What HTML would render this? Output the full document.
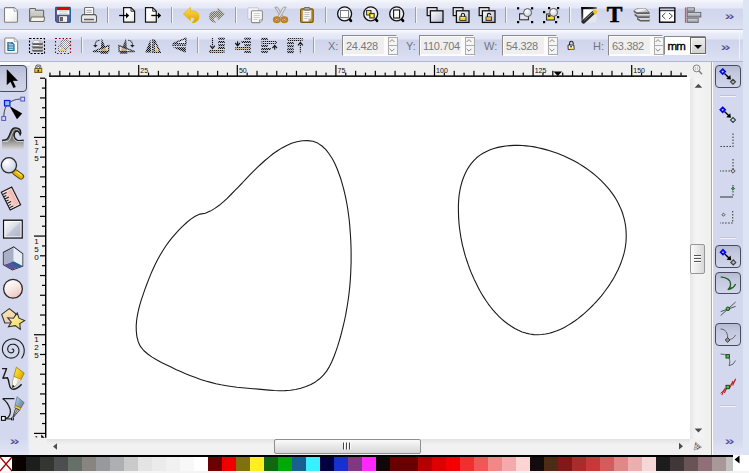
<!DOCTYPE html>
<html><head><meta charset="utf-8"><title>Inkscape</title>
<style>
html,body{margin:0;padding:0;}
body{width:749px;height:473px;overflow:hidden;position:relative;background:#f0f0f0;font-family:"Liberation Sans",sans-serif;font-size:12px;}
.abs,.a{position:absolute;}
svg{position:absolute;overflow:visible;}
#tb1{left:0;top:0;width:743px;height:29px;background:linear-gradient(to bottom,#f6f7fc 0px,#eaecf8 4px,#e5e8f6 8px,#d1d6ed 9px,#d4d9ee 18px,#dde0f2 28px);}
#tb1l{left:0;top:28.600px;width:743px;height:1.400px;background:#b2b6d0;}
#tb2{left:0;top:30px;width:743px;height:31px;background:linear-gradient(to bottom,#fafbfe 0px,#e8ebf8 4px,#e2e5f5 9px,#cfd4eb 10px,#d4d9ee 20px,#dde0f2 30px);}
#tb2l{left:0;top:60.500px;width:743px;height:1.500px;background:#b2b6ce;}
#rstrip{left:743px;top:0;width:6px;height:473px;background:#dce5f4;}
#toolbox{left:0;top:62px;width:30px;height:393px;background:linear-gradient(to right,#d3d8ee 0,#d3d8ee 27px,#e8ebf7 29px,#eef0f8 30px);}
#toolboxt{left:0;top:62px;width:30px;height:5px;background:linear-gradient(to bottom,#fdfdfe 0,#fafbfe 3px,#d3d8ee 5px);}
#snapbar{left:713px;top:62px;width:30px;height:393px;background:#d3d8ee;}
#snapl{left:711px;top:62px;width:1px;height:393px;background:#a8a8a8;box-shadow:1px 0 0 #fff;}
#canvas{left:47px;top:77px;width:643px;height:362px;background:#fff;}
.sep{position:absolute;width:1px;height:16px;background:#9a9eb4;box-shadow:1px 0 0 #f4f5fb;}
.hsep{position:absolute;height:1px;width:16px;background:#f2f3fa;box-shadow:0 -1px 0 #bfc4dc;}
.lbl{position:absolute;color:#74747e;font-size:11px;line-height:12px;top:40px;}
.fld{position:absolute;top:35px;height:19px;width:53px;background:#fbfbfb;border:1px solid #8a8a8a;border-right-color:#fff;border-bottom-color:#fff;color:#7a7a7e;font-size:11px;line-height:12px;letter-spacing:-0.300px;}
.fld b{position:absolute;left:1px;top:1px;width:40px;height:17px;background:#efefef;font-weight:normal;}
.fld span{position:absolute;left:3px;top:4px;}
.spin i{position:absolute;left:44.500px;width:8px;height:7.600px;border:1px solid #aaa;background:#f5f5f5;}
.pbtn{position:absolute;width:24.200px;height:20.600px;border:1.400px solid #484c5a;border-radius:4px;background:linear-gradient(to bottom,#b6bbd4 0,#c4c9e0 35%,#d0d5ea 100%);}
.chev{position:absolute;color:#4a4496;font-size:15px;font-weight:normal;line-height:10px;transform:scale(1.120,0.780);transform-origin:0 0;-webkit-text-stroke:0.300px #4a4496;}
.rt{position:absolute;font-size:9px;line-height:9px;color:#000;}
</style></head><body>
<div id="tb1" class="abs"></div><div id="tb1l" class="abs"></div>
<div id="tb2" class="abs"></div><div id="tb2l" class="abs"></div>
<div id="toolbox" class="abs"></div><div id="toolboxt" class="abs"></div><div class="a" style="left:0;top:438px;width:28px;height:17px;background:linear-gradient(to bottom,rgba(226,229,245,0),rgba(226,229,245,1))"></div>
<div id="snapl" class="abs"></div><div id="snapbar" class="abs"></div><div class="a" style="left:713px;top:438px;width:30px;height:17px;background:linear-gradient(to bottom,rgba(226,229,245,0),rgba(226,229,245,1))"></div>
<div id="rstrip" class="abs"></div><div class="a" style="left:738.500px;top:31px;width:1.500px;height:28px;background:#f0f2fa"></div>
<div id="canvas" class="abs"></div>
<svg width="749" height="473" style="left:0;top:0"><clipPath id="vrc"><rect x="31" y="77" width="16" height="360.700"/></clipPath><rect x="49" y="75.400" width="638" height="1.500" fill="#000"/><rect x="49.36" y="72.600" width="1.200" height="3" fill="#000"/><rect x="59.22" y="70.800" width="1.200" height="5" fill="#000"/><rect x="69.08" y="72.600" width="1.200" height="3" fill="#000"/><rect x="78.94" y="70.800" width="1.200" height="5" fill="#000"/><rect x="88.80" y="72.600" width="1.200" height="3" fill="#000"/><rect x="98.66" y="70.800" width="1.200" height="5" fill="#000"/><rect x="108.52" y="72.600" width="1.200" height="3" fill="#000"/><rect x="118.38" y="70.800" width="1.200" height="5" fill="#000"/><rect x="128.24" y="72.600" width="1.200" height="3" fill="#000"/><rect x="138.10" y="65" width="1.200" height="11" fill="#000"/><rect x="147.96" y="72.600" width="1.200" height="3" fill="#000"/><rect x="157.82" y="70.800" width="1.200" height="5" fill="#000"/><rect x="167.68" y="72.600" width="1.200" height="3" fill="#000"/><rect x="177.54" y="70.800" width="1.200" height="5" fill="#000"/><rect x="187.40" y="72.600" width="1.200" height="3" fill="#000"/><rect x="197.26" y="70.800" width="1.200" height="5" fill="#000"/><rect x="207.12" y="72.600" width="1.200" height="3" fill="#000"/><rect x="216.98" y="70.800" width="1.200" height="5" fill="#000"/><rect x="226.84" y="72.600" width="1.200" height="3" fill="#000"/><rect x="236.70" y="65" width="1.200" height="11" fill="#000"/><rect x="246.56" y="72.600" width="1.200" height="3" fill="#000"/><rect x="256.42" y="70.800" width="1.200" height="5" fill="#000"/><rect x="266.28" y="72.600" width="1.200" height="3" fill="#000"/><rect x="276.14" y="70.800" width="1.200" height="5" fill="#000"/><rect x="286.00" y="72.600" width="1.200" height="3" fill="#000"/><rect x="295.86" y="70.800" width="1.200" height="5" fill="#000"/><rect x="305.72" y="72.600" width="1.200" height="3" fill="#000"/><rect x="315.58" y="70.800" width="1.200" height="5" fill="#000"/><rect x="325.44" y="72.600" width="1.200" height="3" fill="#000"/><rect x="335.30" y="65" width="1.200" height="11" fill="#000"/><rect x="345.16" y="72.600" width="1.200" height="3" fill="#000"/><rect x="355.02" y="70.800" width="1.200" height="5" fill="#000"/><rect x="364.88" y="72.600" width="1.200" height="3" fill="#000"/><rect x="374.74" y="70.800" width="1.200" height="5" fill="#000"/><rect x="384.60" y="72.600" width="1.200" height="3" fill="#000"/><rect x="394.46" y="70.800" width="1.200" height="5" fill="#000"/><rect x="404.32" y="72.600" width="1.200" height="3" fill="#000"/><rect x="414.18" y="70.800" width="1.200" height="5" fill="#000"/><rect x="424.04" y="72.600" width="1.200" height="3" fill="#000"/><rect x="433.90" y="65" width="1.200" height="11" fill="#000"/><rect x="443.76" y="72.600" width="1.200" height="3" fill="#000"/><rect x="453.62" y="70.800" width="1.200" height="5" fill="#000"/><rect x="463.48" y="72.600" width="1.200" height="3" fill="#000"/><rect x="473.34" y="70.800" width="1.200" height="5" fill="#000"/><rect x="483.20" y="72.600" width="1.200" height="3" fill="#000"/><rect x="493.06" y="70.800" width="1.200" height="5" fill="#000"/><rect x="502.92" y="72.600" width="1.200" height="3" fill="#000"/><rect x="512.78" y="70.800" width="1.200" height="5" fill="#000"/><rect x="522.64" y="72.600" width="1.200" height="3" fill="#000"/><rect x="532.50" y="65" width="1.200" height="11" fill="#000"/><rect x="542.36" y="72.600" width="1.200" height="3" fill="#000"/><rect x="552.22" y="70.800" width="1.200" height="5" fill="#000"/><rect x="562.08" y="72.600" width="1.200" height="3" fill="#000"/><rect x="571.94" y="70.800" width="1.200" height="5" fill="#000"/><rect x="581.80" y="72.600" width="1.200" height="3" fill="#000"/><rect x="591.66" y="70.800" width="1.200" height="5" fill="#000"/><rect x="601.52" y="72.600" width="1.200" height="3" fill="#000"/><rect x="611.38" y="70.800" width="1.200" height="5" fill="#000"/><rect x="621.24" y="72.600" width="1.200" height="3" fill="#000"/><rect x="631.10" y="65" width="1.200" height="11" fill="#000"/><rect x="640.96" y="72.600" width="1.200" height="3" fill="#000"/><rect x="650.82" y="70.800" width="1.200" height="5" fill="#000"/><rect x="660.68" y="72.600" width="1.200" height="3" fill="#000"/><rect x="670.54" y="70.800" width="1.200" height="5" fill="#000"/><rect x="680.40" y="72.600" width="1.200" height="3" fill="#000"/><text x="140.3" y="73.400" font-size="8" font-family="Liberation Sans, sans-serif" fill="#0a0a0a" textLength="7.8" lengthAdjust="spacingAndGlyphs">25</text><text x="238.9" y="73.400" font-size="8" font-family="Liberation Sans, sans-serif" fill="#0a0a0a" textLength="7.8" lengthAdjust="spacingAndGlyphs">50</text><text x="337.5" y="73.400" font-size="8" font-family="Liberation Sans, sans-serif" fill="#0a0a0a" textLength="7.8" lengthAdjust="spacingAndGlyphs">75</text><text x="436.1" y="73.400" font-size="8" font-family="Liberation Sans, sans-serif" fill="#0a0a0a" textLength="11.7" lengthAdjust="spacingAndGlyphs">100</text><text x="534.7" y="73.400" font-size="8" font-family="Liberation Sans, sans-serif" fill="#0a0a0a" textLength="11.7" lengthAdjust="spacingAndGlyphs">125</text><text x="633.3" y="73.400" font-size="8" font-family="Liberation Sans, sans-serif" fill="#0a0a0a" textLength="11.7" lengthAdjust="spacingAndGlyphs">150</text><path d="M553.500 71.400h8.600l-4.300 4.600z" fill="#000"/><rect x="45" y="78.500" width="1.400" height="359.200" fill="#000"/><g clip-path="url(#vrc)"><rect x="40" y="77.60" width="5" height="1.200" fill="#000"/><rect x="42" y="87.47" width="3" height="1.200" fill="#000"/><rect x="40" y="97.33" width="5" height="1.200" fill="#000"/><rect x="42" y="107.20" width="3" height="1.200" fill="#000"/><rect x="40" y="117.07" width="5" height="1.200" fill="#000"/><rect x="42" y="126.93" width="3" height="1.200" fill="#000"/><rect x="34" y="136.80" width="11" height="1.200" fill="#000"/><rect x="42" y="146.67" width="3" height="1.200" fill="#000"/><rect x="40" y="156.53" width="5" height="1.200" fill="#000"/><rect x="42" y="166.40" width="3" height="1.200" fill="#000"/><rect x="40" y="176.27" width="5" height="1.200" fill="#000"/><rect x="42" y="186.14" width="3" height="1.200" fill="#000"/><rect x="40" y="196.00" width="5" height="1.200" fill="#000"/><rect x="42" y="205.87" width="3" height="1.200" fill="#000"/><rect x="40" y="215.74" width="5" height="1.200" fill="#000"/><rect x="42" y="225.60" width="3" height="1.200" fill="#000"/><rect x="34" y="235.47" width="11" height="1.200" fill="#000"/><rect x="42" y="245.34" width="3" height="1.200" fill="#000"/><rect x="40" y="255.20" width="5" height="1.200" fill="#000"/><rect x="42" y="265.07" width="3" height="1.200" fill="#000"/><rect x="40" y="274.94" width="5" height="1.200" fill="#000"/><rect x="42" y="284.80" width="3" height="1.200" fill="#000"/><rect x="40" y="294.67" width="5" height="1.200" fill="#000"/><rect x="42" y="304.54" width="3" height="1.200" fill="#000"/><rect x="40" y="314.41" width="5" height="1.200" fill="#000"/><rect x="42" y="324.27" width="3" height="1.200" fill="#000"/><rect x="34" y="334.14" width="11" height="1.200" fill="#000"/><rect x="42" y="344.01" width="3" height="1.200" fill="#000"/><rect x="40" y="353.87" width="5" height="1.200" fill="#000"/><rect x="42" y="363.74" width="3" height="1.200" fill="#000"/><rect x="40" y="373.61" width="5" height="1.200" fill="#000"/><rect x="42" y="383.48" width="3" height="1.200" fill="#000"/><rect x="40" y="393.34" width="5" height="1.200" fill="#000"/><rect x="42" y="403.21" width="3" height="1.200" fill="#000"/><rect x="40" y="413.08" width="5" height="1.200" fill="#000"/><rect x="42" y="422.94" width="3" height="1.200" fill="#000"/><rect x="34" y="432.81" width="11" height="1.200" fill="#000"/><text x="34.300" y="144.9" font-size="8" font-family="Liberation Sans, sans-serif" fill="#0a0a0a">1</text><text x="34.300" y="152.9" font-size="8" font-family="Liberation Sans, sans-serif" fill="#0a0a0a">7</text><text x="34.300" y="160.9" font-size="8" font-family="Liberation Sans, sans-serif" fill="#0a0a0a">5</text><text x="34.300" y="243.6" font-size="8" font-family="Liberation Sans, sans-serif" fill="#0a0a0a">1</text><text x="34.300" y="251.6" font-size="8" font-family="Liberation Sans, sans-serif" fill="#0a0a0a">5</text><text x="34.300" y="259.6" font-size="8" font-family="Liberation Sans, sans-serif" fill="#0a0a0a">0</text><text x="34.300" y="342.2" font-size="8" font-family="Liberation Sans, sans-serif" fill="#0a0a0a">1</text><text x="34.300" y="350.2" font-size="8" font-family="Liberation Sans, sans-serif" fill="#0a0a0a">2</text><text x="34.300" y="358.2" font-size="8" font-family="Liberation Sans, sans-serif" fill="#0a0a0a">5</text><text x="34.300" y="440.9" font-size="8" font-family="Liberation Sans, sans-serif" fill="#0a0a0a">1</text><text x="34.300" y="448.9" font-size="8" font-family="Liberation Sans, sans-serif" fill="#0a0a0a">0</text><text x="34.300" y="456.9" font-size="8" font-family="Liberation Sans, sans-serif" fill="#0a0a0a">0</text><path d="M41.200 434.400l4.800 4.600l-4.800 4.600z" fill="#000"/></g></svg>
<svg width="749" height="473" style="left:0;top:0"><path d="M205.4 213.2 L210.3 211.1 L214.9 208.4 L219.2 205.3 L223.3 201.9 L227.2 198.3 L231.0 194.5 L234.7 190.7 L238.5 186.8 L242.2 183.0 L245.8 179.1 L249.6 175.2 L253.3 171.4 L257.1 167.7 L261.0 164.0 L264.9 160.5 L269.0 157.1 L273.1 153.8 L277.5 150.7 L282.0 147.9 L286.7 145.4 L291.6 143.3 L296.9 141.8 L302.3 140.8 L307.7 140.6 L312.9 141.3 L317.7 143.1 L322.0 146.0 L325.9 149.7 L329.2 154.0 L332.2 158.5 L334.7 163.3 L336.9 168.2 L338.8 173.2 L340.6 178.2 L342.1 183.3 L343.5 188.4 L344.8 193.6 L345.9 198.7 L346.9 204.0 L347.8 209.2 L348.5 214.5 L349.2 219.8 L349.7 225.1 L350.1 230.4 L350.5 235.7 L350.8 241.1 L351.0 246.4 L351.1 251.8 L351.1 257.2 L351.1 262.5 L350.9 267.9 L350.7 273.2 L350.4 278.6 L350.0 283.9 L349.5 289.2 L348.9 294.5 L348.2 299.7 L347.4 305.0 L346.5 310.2 L345.6 315.4 L344.5 320.5 L343.3 325.7 L342.0 330.9 L340.7 336.0 L339.2 341.2 L337.6 346.4 L335.8 351.6 L333.9 356.8 L331.8 361.8 L329.4 366.6 L326.6 371.1 L323.4 375.2 L319.6 378.8 L315.4 381.9 L310.9 384.5 L306.0 386.6 L300.8 388.3 L295.6 389.5 L290.3 390.3 L284.9 390.6 L279.6 390.7 L274.3 390.5 L269.0 390.1 L263.7 389.6 L258.3 389.1 L253.0 388.7 L247.6 388.2 L242.3 387.7 L236.9 387.2 L231.6 386.5 L226.4 385.7 L221.1 384.8 L215.9 383.7 L210.8 382.4 L205.7 381.0 L200.6 379.4 L195.6 377.6 L190.6 375.7 L185.6 373.7 L180.7 371.6 L175.8 369.4 L171.0 367.1 L166.2 364.8 L161.4 362.4 L156.6 359.8 L152.1 357.1 L147.7 354.0 L143.7 350.5 L140.4 346.4 L138.2 341.7 L136.9 336.6 L136.3 331.2 L136.2 325.9 L136.6 320.5 L137.4 315.3 L138.5 310.0 L139.8 304.9 L141.4 299.7 L143.1 294.6 L144.8 289.6 L146.7 284.5 L148.6 279.6 L150.6 274.6 L152.7 269.8 L154.9 264.9 L157.3 260.2 L159.9 255.6 L162.6 251.0 L165.5 246.5 L168.6 242.1 L171.9 237.9 L175.4 233.8 L179.0 229.9 L182.8 226.1 L186.7 222.5 L190.8 219.1 L195.2 216.2 L200.0 214.1Z" fill="none" stroke="#1a1a1a" stroke-width="1.100" stroke-linejoin="round"/><path d="M514.1 145.4 L518.2 145.4 L522.2 145.5 L526.2 145.9 L530.2 146.3 L534.2 146.9 L538.1 147.7 L542.0 148.6 L545.9 149.6 L549.7 150.7 L553.5 152.0 L557.3 153.3 L561.0 154.8 L564.6 156.3 L568.2 158.0 L571.8 159.8 L575.3 161.6 L578.8 163.6 L582.3 165.8 L585.7 168.0 L589.0 170.4 L592.2 172.8 L595.4 175.4 L598.5 178.1 L601.4 180.9 L604.3 183.8 L607.0 186.8 L609.6 189.9 L612.0 193.1 L614.3 196.4 L616.4 199.8 L618.3 203.3 L620.0 206.9 L621.6 210.5 L622.9 214.3 L624.0 218.1 L624.9 222.0 L625.6 226.0 L626.0 230.0 L626.2 234.0 L626.2 238.0 L626.0 242.0 L625.5 246.0 L624.8 250.0 L623.9 253.9 L622.7 257.8 L621.4 261.7 L619.9 265.5 L618.3 269.2 L616.5 272.8 L614.6 276.4 L612.6 279.9 L610.5 283.3 L608.3 286.6 L606.0 289.8 L603.6 293.0 L601.2 296.1 L598.6 299.1 L595.9 302.1 L593.2 305.0 L590.3 307.8 L587.4 310.6 L584.4 313.4 L581.2 316.0 L578.0 318.6 L574.7 321.0 L571.3 323.3 L567.8 325.4 L564.3 327.4 L560.7 329.2 L557.0 330.7 L553.2 332.1 L549.4 333.2 L545.5 334.0 L541.6 334.5 L537.6 334.7 L533.7 334.6 L529.8 334.0 L525.9 333.1 L522.1 331.9 L518.4 330.3 L514.8 328.5 L511.3 326.3 L507.9 324.0 L504.6 321.5 L501.5 318.9 L498.6 316.1 L495.8 313.2 L493.1 310.1 L490.6 307.0 L488.2 303.8 L485.9 300.5 L483.7 297.1 L481.6 293.7 L479.6 290.2 L477.8 286.7 L476.0 283.1 L474.2 279.4 L472.6 275.8 L471.0 272.1 L469.5 268.3 L468.2 264.6 L466.9 260.8 L465.6 256.9 L464.5 253.1 L463.5 249.2 L462.5 245.3 L461.7 241.4 L460.9 237.4 L460.3 233.4 L459.7 229.5 L459.2 225.5 L458.9 221.5 L458.6 217.4 L458.5 213.4 L458.4 209.4 L458.4 205.3 L458.6 201.3 L458.9 197.3 L459.4 193.3 L460.1 189.3 L461.0 185.4 L462.1 181.5 L463.4 177.7 L465.0 174.0 L466.8 170.3 L468.9 166.9 L471.2 163.6 L473.8 160.6 L476.6 157.8 L479.7 155.4 L483.0 153.2 L486.5 151.4 L490.2 149.8 L493.9 148.5 L497.9 147.4 L501.9 146.6 L505.9 146.0 L510.0 145.6Z" fill="none" stroke="#1a1a1a" stroke-width="1.100" stroke-linejoin="round"/></svg>
<div class="a" style="left:690px;top:78px;width:15px;height:361px;background:linear-gradient(to right,#e6e6e6,#f4f4f4 40%,#f2f2f2)"></div>
<div class="a" style="left:690px;top:244px;width:13px;height:28px;border:1px solid #979797;border-radius:2px;background:linear-gradient(to right,#fbfbfb,#e9e9e9 50%,#d8d8d8)"></div>
<svg width="15" height="30" style="left:690px;top:244px"><path d="M4 11.5h7M4 14.5h7M4 17.5h7" stroke="#555" stroke-width="1"/><path d="M4 12.5h7M4 15.5h7M4 18.5h7" stroke="#fff" stroke-width="1"/></svg>
<svg width="15" height="10" style="left:690px;top:80px"><path d="M4.600 7.800L8.400 3.700L12.200 7.800Z" fill="#4c4c4c"/></svg>
<svg width="15" height="10" style="left:690px;top:426px"><path d="M4.600 2.500L8.400 6.600L12.200 2.500Z" fill="#4c4c4c"/></svg>
<div class="a" style="left:47px;top:439px;width:643px;height:15px;background:linear-gradient(to bottom,#e2e2e2,#f2f2f2 40%,#f0f0f0)"></div>
<div class="a" style="left:274px;top:439px;width:145px;height:13px;border:1px solid #8f8f8f;border-radius:2px;background:linear-gradient(to bottom,#fafafa,#e8e8e8 50%,#d6d6d6)"></div>
<svg width="12" height="10" style="left:341px;top:441px"><path d="M2.5 1.5v7M5.5 1.5v7M8.5 1.5v7" stroke="#444" stroke-width="1"/><path d="M3.5 1.5v7M6.5 1.5v7M9.5 1.5v7" stroke="#fff" stroke-width="1"/></svg>
<svg width="10" height="12" style="left:50px;top:440px"><path d="M7 3.300L3 6.500L7 9.800Z" fill="#4c4c4c"/></svg>
<svg width="10" height="12" style="left:676px;top:440px"><path d="M3 2.800L7 6.200L3 9.600Z" fill="#4c4c4c"/></svg>
<div class="a" style="left:0;top:455.400px;width:733px;height:1.600px;background:#000"></div><div class="a" style="left:733px;top:455px;width:16px;height:16px;background:#fff"></div><div class="a" style="left:0;top:471px;width:749px;height:2px;background:#f4f4f4"></div><div class="a" style="left:0;top:457px;width:12px;height:14px;background:#fff"></div><svg width="12" height="14" style="left:0;top:457px"><path d="M0 0L12 14M12 0L0 14" stroke="#a40000" stroke-width="1.3"/></svg><div class="a" style="left:12px;top:457px;width:14px;height:14px;background:#0a0000"></div><div class="a" style="left:26px;top:457px;width:14px;height:14px;background:#1c1e1e"></div><div class="a" style="left:40px;top:457px;width:14px;height:14px;background:#343634"></div><div class="a" style="left:54px;top:457px;width:14px;height:14px;background:#4c4e50"></div><div class="a" style="left:68px;top:457px;width:14px;height:14px;background:#667068"></div><div class="a" style="left:82px;top:457px;width:14px;height:14px;background:#888480"></div><div class="a" style="left:96px;top:457px;width:14px;height:14px;background:#98999c"></div><div class="a" style="left:110px;top:457px;width:14px;height:14px;background:#aeafb2"></div><div class="a" style="left:124px;top:457px;width:14px;height:14px;background:#cacaca"></div><div class="a" style="left:138px;top:457px;width:14px;height:14px;background:#e4e4e4"></div><div class="a" style="left:152px;top:457px;width:14px;height:14px;background:#ebebeb"></div><div class="a" style="left:166px;top:457px;width:14px;height:14px;background:#f1f1f1"></div><div class="a" style="left:180px;top:457px;width:14px;height:14px;background:#f8f8f8"></div><div class="a" style="left:194px;top:457px;width:14px;height:14px;background:#ffffff"></div><div class="a" style="left:208px;top:457px;width:14px;height:14px;background:#6b0000"></div><div class="a" style="left:222px;top:457px;width:14px;height:14px;background:#ee0000"></div><div class="a" style="left:236px;top:457px;width:14px;height:14px;background:#80700f"></div><div class="a" style="left:250px;top:457px;width:14px;height:14px;background:#ffee22"></div><div class="a" style="left:264px;top:457px;width:14px;height:14px;background:#106810"></div><div class="a" style="left:278px;top:457px;width:14px;height:14px;background:#00a808"></div><div class="a" style="left:292px;top:457px;width:14px;height:14px;background:#186090"></div><div class="a" style="left:306px;top:457px;width:14px;height:14px;background:#38f0ff"></div><div class="a" style="left:320px;top:457px;width:14px;height:14px;background:#000040"></div><div class="a" style="left:334px;top:457px;width:14px;height:14px;background:#1830d0"></div><div class="a" style="left:348px;top:457px;width:14px;height:14px;background:#803880"></div><div class="a" style="left:362px;top:457px;width:14px;height:14px;background:#ff28ff"></div><div class="a" style="left:376px;top:457px;width:14px;height:14px;background:#100808"></div><div class="a" style="left:390px;top:457px;width:14px;height:14px;background:#680000"></div><div class="a" style="left:404px;top:457px;width:14px;height:14px;background:#680000"></div><div class="a" style="left:418px;top:457px;width:14px;height:14px;background:#b40000"></div><div class="a" style="left:432px;top:457px;width:14px;height:14px;background:#dc0000"></div><div class="a" style="left:446px;top:457px;width:14px;height:14px;background:#f40000"></div><div class="a" style="left:460px;top:457px;width:14px;height:14px;background:#f03030"></div><div class="a" style="left:474px;top:457px;width:14px;height:14px;background:#f05858"></div><div class="a" style="left:488px;top:457px;width:14px;height:14px;background:#f08888"></div><div class="a" style="left:502px;top:457px;width:14px;height:14px;background:#f4aaaa"></div><div class="a" style="left:516px;top:457px;width:14px;height:14px;background:#fcd4d4"></div><div class="a" style="left:530px;top:457px;width:14px;height:14px;background:#140c0c"></div><div class="a" style="left:544px;top:457px;width:14px;height:14px;background:#4c2c14"></div><div class="a" style="left:558px;top:457px;width:14px;height:14px;background:#841818"></div><div class="a" style="left:572px;top:457px;width:14px;height:14px;background:#a82c2c"></div><div class="a" style="left:586px;top:457px;width:14px;height:14px;background:#c83838"></div><div class="a" style="left:600px;top:457px;width:14px;height:14px;background:#d45c5c"></div><div class="a" style="left:614px;top:457px;width:14px;height:14px;background:#e08888"></div><div class="a" style="left:628px;top:457px;width:14px;height:14px;background:#ecaeae"></div><div class="a" style="left:642px;top:457px;width:14px;height:14px;background:#f4d8d8"></div><div class="a" style="left:656px;top:457px;width:14px;height:14px;background:#1c1c1c"></div><div class="a" style="left:670px;top:457px;width:14px;height:14px;background:#403838"></div><div class="a" style="left:684px;top:457px;width:14px;height:14px;background:#685454"></div><div class="a" style="left:698px;top:457px;width:14px;height:14px;background:#907078"></div><div class="a" style="left:712px;top:457px;width:14px;height:14px;background:#a89898"></div><div class="a" style="left:726px;top:457px;width:7px;height:14px;background:#c0c0c0"></div><svg width="8" height="10" style="left:733px;top:455px"><path d="M6.5 0.5L1.5 4.5L6.5 8.5Z" fill="#000"/></svg>
<div class="pbtn" style="left:-3px;top:65.200px;width:28.200px;height:24.800px"></div><div class="pbtn" style="left:715px;top:65.2px"></div><div class="pbtn" style="left:715px;top:245.3px"></div><div class="pbtn" style="left:715px;top:271.5px"></div><div class="pbtn" style="left:715px;top:323.4px"></div><div class="sep" style="left:107px;top:7px"></div><div class="sep" style="left:171px;top:7px"></div><div class="sep" style="left:235px;top:7px"></div><div class="sep" style="left:325px;top:7px"></div><div class="sep" style="left:415px;top:7px"></div><div class="sep" style="left:505px;top:7px"></div><div class="sep" style="left:569px;top:7px"></div><div class="sep" style="left:81px;top:37px"></div><div class="sep" style="left:197px;top:37px"></div><div class="sep" style="left:313px;top:37px"></div><div class="hsep" style="left:720px;top:96px"></div><div class="hsep" style="left:720px;top:238px"></div><div class="hsep" style="left:720px;top:406px"></div><div class="chev" style="left:724.500px;top:11.600px">»</div><div class="chev" style="left:720.500px;top:42.700px">»</div><div class="chev" style="left:10px;top:436.500px">»</div><div class="chev" style="left:725px;top:436.500px">»</div><div class="lbl" style="left:328px">X:</div><div class="fld" style="left:342px"><b></b><span>24.428</span><div class="spin"><i style="top:0.800px"></i><i style="top:9.400px"></i></div></div><svg width="10" height="20" style="left:387px;top:35px"><path d="M2.600 7l2.400-2.400l2.400 2.400M2.600 13.800l2.400 2.400l2.400-2.400" fill="none" stroke="#868686" stroke-width="1"/></svg><div class="lbl" style="left:406px">Y:</div><div class="fld" style="left:419px"><b></b><span>110.704</span><div class="spin"><i style="top:0.800px"></i><i style="top:9.400px"></i></div></div><svg width="10" height="20" style="left:464px;top:35px"><path d="M2.600 7l2.400-2.400l2.400 2.400M2.600 13.800l2.400 2.400l2.400-2.400" fill="none" stroke="#868686" stroke-width="1"/></svg><div class="lbl" style="left:484px">W:</div><div class="fld" style="left:502px"><b></b><span>54.328</span><div class="spin"><i style="top:0.800px"></i><i style="top:9.400px"></i></div></div><svg width="10" height="20" style="left:547px;top:35px"><path d="M2.600 7l2.400-2.400l2.400 2.400M2.600 13.800l2.400 2.400l2.400-2.400" fill="none" stroke="#868686" stroke-width="1"/></svg><div class="lbl" style="left:593px">H:</div><div class="fld" style="left:608px"><b></b><span>63.382</span><div class="spin"><i style="top:0.800px"></i><i style="top:9.400px"></i></div></div><svg width="10" height="20" style="left:653px;top:35px"><path d="M2.600 7l2.400-2.400l2.400 2.400M2.600 13.800l2.400 2.400l2.400-2.400" fill="none" stroke="#868686" stroke-width="1"/></svg><div class="a" style="left:664px;top:35.500px;width:42px;height:19px;background:#fff;border:1px solid #8a8a8a;border-right-color:#fff;border-bottom-color:#fff;box-sizing:border-box"></div><div class="a" style="left:667.500px;top:39.500px;font-size:11.500px;line-height:12px;color:#000;letter-spacing:-0.900px;-webkit-text-stroke:0.350px #000">mm</div><div class="a" style="left:689.500px;top:36.500px;width:16.500px;height:17.500px;box-sizing:border-box;background:linear-gradient(to bottom,#ececec,#d2d2d2);border:1.500px solid #666c60;box-shadow:inset 1px 1px 0 #f8f8f8"></div><svg width="10" height="6" style="left:694px;top:44.700px"><path d="M0 0h8l-4 4z" fill="#000"/></svg><svg width="749" height="473" style="left:0;top:0"><defs>
<pattern id="st" width="2" height="2" patternUnits="userSpaceOnUse"><rect width="2" height="2" fill="#000" opacity="0.220"/><rect width="1" height="1" fill="#111"/><rect x="1" y="1" width="1" height="1" fill="#111"/></pattern>
<pattern id="stl" width="2" height="2" patternUnits="userSpaceOnUse"><rect width="2" height="2" fill="#fff" opacity="0.450"/><rect width="1" height="1" fill="#6a6a6a"/><rect x="1" y="1" width="1" height="1" fill="#6a6a6a"/></pattern><pattern id="stg" width="2" height="2" patternUnits="userSpaceOnUse"><rect width="1" height="1" fill="#666"/><rect x="1" y="1" width="1" height="1" fill="#666"/></pattern>
<linearGradient id="gpage" x1="0" y1="0" x2="1" y2="1"><stop offset="0" stop-color="#fff"/><stop offset="0.500" stop-color="#fafafa"/><stop offset="1" stop-color="#e6e6e4"/></linearGradient>
<linearGradient id="gsq" x1="0" y1="0" x2="1" y2="1"><stop offset="0" stop-color="#fff"/><stop offset="1" stop-color="#b4b9cc"/></linearGradient>
<linearGradient id="gund" x1="0" y1="0" x2="0" y2="1"><stop offset="0" stop-color="#ffe050"/><stop offset="1" stop-color="#d8a000"/></linearGradient>
<linearGradient id="gfold" x1="0" y1="0" x2="0" y2="1"><stop offset="0" stop-color="#dcdcd8"/><stop offset="1" stop-color="#b0b0ac"/></linearGradient>
<linearGradient id="gtw" x1="0" y1="0" x2="0" y2="1"><stop offset="0" stop-color="#4a4a4a"/><stop offset="0.550" stop-color="#7e7e7e"/><stop offset="0.650" stop-color="#9a9a9a"/><stop offset="1" stop-color="#dadada"/></linearGradient>
<linearGradient id="gell" x1="0.2" y1="0" x2="0.8" y2="1"><stop offset="0" stop-color="#fff"/><stop offset="0.45" stop-color="#f6ebe8"/><stop offset="1" stop-color="#f2bdb4"/></linearGradient>
<linearGradient id="gstar" x1="0" y1="0" x2="0.6" y2="1"><stop offset="0" stop-color="#fff8c0"/><stop offset="1" stop-color="#f4d860"/></linearGradient>
<linearGradient id="gpent" x1="0" y1="0" x2="0.3" y2="1"><stop offset="0" stop-color="#fff0a0"/><stop offset="1" stop-color="#f0c8c0"/></linearGradient>
<radialGradient id="gzoom" cx="0.35" cy="0.3" r="0.8"><stop offset="0" stop-color="#fff"/><stop offset="1" stop-color="#c4cce0"/></radialGradient>
</defs><path d="M5.5 7.6h8.6l3.4 3.4v10.2q0 1-1 1h-11q-1 0-1-1v-12.6q0-1 1-1z" fill="url(#gpage)" stroke="#808080" stroke-width="1.1"/><path d="M14 7.8v3.4h3.4" fill="#fafafa" stroke="#a0a0a0" stroke-width="0.8"/><path d="M29.6 21.2v-12q0-.7.7-.7h4.5q.7 0 .7.7v1h7.3q.8 0 .8.8v10.2z" fill="url(#gfold)" stroke="#666a5e" stroke-width="1.1"/><path d="M31.300 17h13.400l-.900 4.500h-13.400z" fill="#f2f2e8" stroke="#6a6e62" stroke-width="1"/><path d="M55.6 8q0-.6.6-.6h13.6q.6 0 .6.6v13.8q0 .6-.6.6h-12.6l-1.6-1.6z" fill="#625aa6" stroke="#1e5e9a" stroke-width="1.100"/><rect x="57" y="7.2" width="12.4" height="3" fill="#e00000"/><rect x="57" y="10.2" width="12.4" height="4.4" fill="#fbfbfb"/><path d="M59 11.7h8.5M59 13.3h8.5" stroke="#d0d0d0" stroke-width="0.9"/><rect x="58.7" y="15.7" width="9" height="6.7" fill="#f0f0f0" stroke="#4c4c4c" stroke-width="1"/><rect x="60.4" y="17.4" width="2.2" height="3.4" fill="#6a60b0" stroke="#444" stroke-width="0.7"/><rect x="84.6" y="7.5" width="9" height="8" rx="0.8" fill="#fafafa" stroke="#707070" stroke-width="1.1"/><path d="M86.5 10.3h5.3M86.5 12.3h5.3" stroke="#a0a4ac" stroke-width="1"/><path d="M82.8 14.6h12.4l1.3 1.6v5q0 1-1 1h-13q-1 0-1-1v-5z" fill="#e9e9e9" stroke="#5c5c5c" stroke-width="1.1"/><path d="M84 19.500h10" stroke="#606060" stroke-width="1.500"/><path d="M123.6 7.6h7.4l3.6 3.6v11h-11z" fill="url(#gpage)" stroke="#141414" stroke-width="1.2"/><path d="M131 7.8v3.4h3.4" fill="none" stroke="#141414" stroke-width="0.9"/><path d="M119.2 15.5h8" stroke="#000" stroke-width="1.3"/><path d="M126 12.6l3.2 2.9l-3.2 2.9z" fill="#000"/><path d="M145.5 7.6h7.2l3.6 3.6v11h-10.8z" fill="url(#gpage)" stroke="#141414" stroke-width="1.2"/><path d="M152.7 7.8v3.4h3.4" fill="none" stroke="#141414" stroke-width="0.9"/><path d="M151.3 15.5h8" stroke="#000" stroke-width="1.3"/><path d="M158 12.6l3.2 2.9l-3.2 2.9z" fill="#000"/><path d="M183.4 14L190.4 7.4V11Q199 10.6 199 16.6Q199 21.6 193.6 22.8L192 22.4Q194.8 20.6 194.4 18.6Q194 17 190.4 17.2V20.6Z" fill="url(#gund)" stroke="#e8b000" stroke-width="0.7"/><g transform="translate(408.100,0) scale(-1,1)"><path d="M183.4 14L190.4 7.4V11Q199 10.6 199 16.6Q199 21.6 193.6 22.8L192 22.4Q194.8 20.6 194.4 18.6Q194 17 190.4 17.2V20.6Z" fill="#d8c060" opacity="0.300"/><path d="M183.4 14L190.4 7.4V11Q199 10.6 199 16.6Q199 21.6 193.6 22.8L192 22.4Q194.8 20.6 194.4 18.6Q194 17 190.4 17.2V20.6Z" fill="url(#stg)"/></g><rect x="247.8" y="7.8" width="10.6" height="11.2" rx="0.8" fill="#f4f4f8" stroke="#c2c4d0" stroke-width="1"/><path d="M252.4 10.8h9q1 0 1 1v8l-2.8 2.8h-7.2q-1 0-1-1v-9.800q0-1 1-1z" fill="#fcfcfc" stroke="#8c8c8c" stroke-width="1.1"/><path d="M253.6 13.6h6.600M253.600 15.600h6.600M253.600 17.600h6.600M253.600 19.600h4" stroke="#c4c4c4" stroke-width="0.9"/><path d="M262.200 19.800h-2.800v2.800" fill="#f0f0f0" stroke="#8c8c8c" stroke-width="0.8"/><path d="M274.800 7.200H277.600L283.200 16.800L281.600 18.200Z" fill="#d6d6d6" stroke="#8c8c8c" stroke-width="0.700"/><path d="M286.200 7.200H283.400L277.800 16.800L279.400 18.200Z" fill="#e0e0e0" stroke="#8c8c8c" stroke-width="0.700"/><ellipse cx="276.800" cy="19.700" rx="3" ry="2.500" fill="none" stroke="#b88418" stroke-width="1.900"/><ellipse cx="284.300" cy="19.700" rx="3" ry="2.500" fill="none" stroke="#b88418" stroke-width="1.900"/><ellipse cx="276.800" cy="19.700" rx="1.300" ry="1" fill="none" stroke="#d83018" stroke-width="0.800"/><ellipse cx="284.300" cy="19.700" rx="1.300" ry="1" fill="none" stroke="#d83018" stroke-width="0.800"/><rect x="300.600" y="8.800" width="12.600" height="13.600" rx="1.400" fill="#c8962c" stroke="#7c560c" stroke-width="1.200"/><path d="M302.800 10.200H311.200V18.800L308.600 21.400H302.800Z" fill="#fcfcfc" stroke="#a09880" stroke-width="0.500"/><path d="M304.400 12.600h5.200M304.400 14.600h5.200M304.400 16.600h5.200M304.400 18.600h3" stroke="#b4b4b4" stroke-width="0.900"/><path d="M311.200 18.800h-2.600v2.600z" fill="#d0d0c8" stroke="#a09880" stroke-width="0.400"/><rect x="304" y="7.500" width="6" height="2.600" rx="0.800" fill="#a8a8a8" stroke="#585858" stroke-width="0.800"/><path d="M349.6 19.200l1.400 1.600" stroke="#000" stroke-width="2.600" stroke-linecap="round"/><circle cx="344.6" cy="13.800" r="7" fill="#eef0f6" stroke="#111" stroke-width="1.300"/><rect x="340.500" y="10.500" width="8" height="7" fill="#fff" stroke="#000" stroke-width="1" stroke-dasharray="1 1"/><path d="M375.7 19.200l1.400 1.600" stroke="#000" stroke-width="2.600" stroke-linecap="round"/><circle cx="370.7" cy="13.800" r="7" fill="#eef0f6" stroke="#111" stroke-width="1.300"/><rect x="366.600" y="10.400" width="4.400" height="4.600" fill="#f4e050" stroke="#222" stroke-width="0.900"/><rect x="369.800" y="13.400" width="4.400" height="4.600" fill="#f0d020" stroke="#222" stroke-width="0.900"/><rect x="371.200" y="14.800" width="1.600" height="1.800" fill="#fff8c0"/><path d="M401.7 19.200l1.400 1.600" stroke="#000" stroke-width="2.600" stroke-linecap="round"/><circle cx="396.7" cy="13.800" r="7" fill="#eef0f6" stroke="#111" stroke-width="1.300"/><rect x="393.600" y="10" width="6" height="8" fill="url(#gpage)" stroke="#111" stroke-width="1.100"/><rect x="427.2" y="7.600" width="9.800" height="8" fill="#e4e6ee" stroke="#111" stroke-width="1.200"/><rect x="430.4" y="10.800" width="12.600" height="11.600" fill="url(#gsq)" stroke="#111" stroke-width="1.300"/><rect x="453.2" y="7.600" width="9.800" height="8" fill="#e4e6ee" stroke="#111" stroke-width="1.200"/><rect x="456.4" y="10.800" width="12.600" height="11.600" fill="url(#gsq)" stroke="#111" stroke-width="1.300"/><path d="M461.200 16.800v-1.600q0-2 1.700-2q1.700 0 1.700 2v1.600" fill="none" stroke="#111" stroke-width="1.100"/><rect x="459.800" y="16.700" width="6.200" height="3.800" fill="#f4c830" stroke="#222" stroke-width="0.800"/><path d="M460.400 17.600h5" stroke="#fff0a0" stroke-width="0.800"/><rect x="479.2" y="7.600" width="9.800" height="8" fill="#e4e6ee" stroke="#111" stroke-width="1.200"/><rect x="482.4" y="10.800" width="12.600" height="11.600" fill="url(#gsq)" stroke="#111" stroke-width="1.300"/><path d="M487.400 17v-1.800q0-1.800 1.600-1.800q1.500 0 1.800 1.400" fill="none" stroke="#111" stroke-width="1.100"/><rect x="486" y="17" width="5.600" height="3.400" fill="#d8a848" stroke="#222" stroke-width="0.800"/><path d="M486.600 17.900h4.400" stroke="#f8e0a0" stroke-width="0.800"/><rect x="517" y="7.199999999999999" width="2.200" height="2.200" fill="#000"/><rect x="531" y="7.199999999999999" width="2.200" height="2.200" fill="#000"/><rect x="517" y="21" width="2.200" height="2.200" fill="#000"/><rect x="531" y="21" width="2.200" height="2.200" fill="#000"/><rect x="519.600" y="13.800" width="8.800" height="6" fill="#e4e6ee" stroke="#222" stroke-width="1"/><circle cx="527.600" cy="12.600" r="4" fill="url(#gzoom)" stroke="#555" stroke-width="1"/><rect x="543" y="11" width="2.200" height="2.200" fill="#000"/><rect x="543" y="21" width="2.200" height="2.200" fill="#000"/><rect x="548" y="7" width="2.200" height="2.200" fill="#000"/><rect x="557" y="7" width="2.200" height="2.200" fill="#000"/><rect x="557" y="16" width="2.200" height="2.200" fill="#000"/><rect x="555" y="21" width="2.200" height="2.200" fill="#000"/><rect x="546.600" y="14" width="7.800" height="6" fill="#f4e030" stroke="#222" stroke-width="1"/><rect x="548" y="15" width="2.400" height="2" fill="#333"/><circle cx="553.600" cy="12.400" r="4" fill="url(#gzoom)" stroke="#555" stroke-width="1"/><linearGradient id="gfs1" x1="0" y1="0" x2="1" y2="0"><stop offset="0" stop-color="#000"/><stop offset="0.700" stop-color="#222"/><stop offset="1" stop-color="#888"/></linearGradient><linearGradient id="gfs2" x1="0" y1="0" x2="0" y2="1"><stop offset="0" stop-color="#000"/><stop offset="0.600" stop-color="#333"/><stop offset="1" stop-color="#999"/></linearGradient><path d="M582.400 8.400H596.800V11.500L585 22.600H582.400Z" fill="#fdfdfd"/><path d="M590 18l6.600-5.500v8.500l-2 1.600h-9.500z" fill="#e4e6ee"/><rect x="581.300" y="7" width="15.600" height="2.200" fill="url(#gfs1)"/><rect x="581.300" y="7" width="1.900" height="15.700" fill="url(#gfs2)"/><path d="M583.400 21.800L593.600 12.400" stroke="#2a2a2a" stroke-width="3.800" stroke-linecap="round"/><path d="M584.400 20.200L592.600 12.600" stroke="#8a8a8a" stroke-width="1"/><path d="M592.600 11.600l2.600-2.200l1.800 1.200v2.600l-2 1.800z" fill="#f0c418"/><text x="606.800" y="22.200" font-family="Liberation Serif, serif" font-weight="bold" font-size="23.500" fill="#000" stroke="#000" stroke-width="0.500">T</text><linearGradient id="gly" x1="0" y1="0" x2="1" y2="0.600"><stop offset="0" stop-color="#c4c4c4"/><stop offset="0.500" stop-color="#f4f4f4"/><stop offset="1" stop-color="#b8b8b8"/></linearGradient><path d="M633.600 10.600L637 8.200H645.600L649.600 12.400V14H636.600L633.600 12Z" fill="#5e5e5e"/><path d="M634.200 10.500L637.200 8.600H645.400L648.800 12.200H636.800Z" fill="url(#gly)"/><path d="M634.600 13.600L636.600 15H649.600V18H637.800L634.600 15.600Z" fill="#5e5e5e"/><path d="M637 15.200H649.300V16.300H637.600Z" fill="#d8d8d8"/><path d="M637 17.800L639.200 19H649.600V21.600H640.200L637 19.600Z" fill="#5e5e5e"/><path d="M639.600 19.100H649.300V20.100H640Z" fill="#d0d0d0"/><rect x="659.600" y="8" width="15.200" height="14.200" fill="#fff" stroke="#000" stroke-width="1.400"/><rect x="660.200" y="8.600" width="14" height="1.600" fill="#c4cae0"/><path d="M660 10.700h14.600" stroke="#000" stroke-width="0.900"/><path d="M665.400 13l-3.400 3l3.400 3M669 13l3.400 3l-3.400 3" fill="none" stroke="#484848" stroke-width="1"/><linearGradient id="gal" x1="0" y1="0" x2="0" y2="1"><stop offset="0" stop-color="#dce0e8"/><stop offset="1" stop-color="#8e949e"/></linearGradient><path d="M685.600 7.400v15.400" stroke="#e05050" stroke-width="1.400"/><rect x="687.200" y="7.800" width="7.200" height="3.400" fill="url(#gal)" stroke="#686868" stroke-width="0.900"/><rect x="687.200" y="12.400" width="13.600" height="4.600" fill="url(#gal)" stroke="#606060" stroke-width="0.900"/><rect x="687.200" y="18.200" width="11" height="4.200" fill="url(#gal)" stroke="#686868" stroke-width="0.900"/><path d="M5.800 38h8.400l3.400 3.400v10.800q0 1-1 1h-10.800q-1 0-1-1v-13.200q0-1 1-1z" fill="#fcfcfc" stroke="#8a8a8a" stroke-width="1.100"/><path d="M14.200 38.200v3.400h3.400" fill="#f0f0f0" stroke="#a0a0a0" stroke-width="0.800"/><path d="M7.300 42h5l2.300 2.300v6.600h-7.300z" fill="#1a6a9a"/><path d="M8.600 44.900h4.800M8.600 47.100h4.800M8.600 49.200h4.800" stroke="#fff" stroke-width="1"/><path d="M8.400 43.100h3" stroke="#fff" stroke-width="0.700"/><rect x="29.500" y="38.500" width="15" height="15" fill="none" stroke="#000" stroke-width="1.100" stroke-dasharray="2 1.500"/><path d="M31.800 50.0L34.400 47.2H41L43 50.0Z" fill="#ececec" stroke="#8a8a8a" stroke-width="0.500"/><path d="M31.800 50.0H43V51.2L42 51.800000000000004H33Z" fill="#5c5c5c"/><path d="M38 47.5H41L42.600 49.800000000000004H39.500Z" fill="#c4c4c4"/><path d="M31.800 46.599999999999994L34.400 43.8H41L43 46.599999999999994Z" fill="#f2f2f2" stroke="#8a8a8a" stroke-width="0.500"/><path d="M31.800 46.599999999999994H43V47.8L42 48.4H33Z" fill="#5c5c5c"/><path d="M38 44.099999999999994H41L42.600 46.4H39.500Z" fill="#c4c4c4"/><path d="M31.800 43.199999999999996L34.400 40.4H41L43 43.199999999999996Z" fill="#fafafa" stroke="#8a8a8a" stroke-width="0.500"/><path d="M31.800 43.199999999999996H43V44.4L42 45.0H33Z" fill="#5c5c5c"/><path d="M38 40.699999999999996H41L42.600 43.0H39.500Z" fill="#c4c4c4"/><rect x="55.500" y="38.500" width="15" height="15" fill="none" stroke="#8c0000" stroke-width="1.100" stroke-dasharray="1.500 2"/><path d="M58.600 46.200h7v5.200h-7z" fill="#f4f4f8" opacity="0.600"/><path d="M58.600 46.200h7v5.200h-7z" fill="none" stroke="url(#stg)" stroke-width="1.300"/><path d="M59.400 50.800l2.600-3.400l3 3.400z" fill="#f0c040" opacity="0.800"/><circle cx="65.300" cy="44.300" r="4.300" fill="#eceef6"/><circle cx="65.300" cy="44.300" r="4.300" fill="url(#stl)" opacity="0.600"/><circle cx="65.300" cy="44.300" r="4.300" fill="none" stroke="url(#stg)" stroke-width="1.400"/><path d="M101.700 38.200L108 53.800H100.400Z" fill="url(#st)"/><path d="M92.900 51.600L108.800 45.500L108.500 51.600Z" fill="#f4f0e8" opacity="0.550"/><path d="M92.900 51.600L108.800 45.500L108.500 51.600Z" fill="none" stroke="url(#st)" stroke-width="1.400"/><path d="M100 50.400l6.500-2.400v2.600z" fill="#f0b050" opacity="0.700"/><path d="M99.500 40.300Q95.300 40.300 95.300 45.200" fill="none" stroke="#222" stroke-width="1.100" stroke-dasharray="1.200 0.700"/><path d="M93.100 45h4.500l-2.250 2.600z" fill="#222"/><g transform="translate(227.700,0) scale(-1,1)"><path d="M101.700 38.200L108 53.800H100.400Z" fill="url(#st)"/><path d="M92.900 51.600L108.800 45.500L108.500 51.600Z" fill="#f4f0e8" opacity="0.550"/><path d="M92.900 51.600L108.800 45.500L108.500 51.600Z" fill="none" stroke="url(#st)" stroke-width="1.400"/><path d="M100 50.400l6.500-2.400v2.600z" fill="#f0b050" opacity="0.700"/><path d="M99.500 40.300Q95.300 40.300 95.300 45.200" fill="none" stroke="#222" stroke-width="1.100" stroke-dasharray="1.200 0.700"/><path d="M93.100 45h4.500l-2.250 2.600z" fill="#222"/></g><path d="M150.400 39.600L151.200 52.600H145.200Z" fill="url(#st)"/><path d="M154.200 39.600V52.400H160.100Z" fill="#f4f0e8" opacity="0.550"/><path d="M154.200 39.600V52.400H160.100Z" fill="none" stroke="url(#st)" stroke-width="1.400"/><path d="M155.400 46.500v5h2.400z" fill="#f0a840" opacity="0.800"/><path d="M152.600 39.400v13.400" stroke="#111" stroke-width="1.100" stroke-dasharray="1.300 1.100"/><path d="M185.800 38.200V43.800H172.600Z" fill="#f0f0f4" opacity="0.550"/><path d="M185.800 38.200V43.800H172.600Z" fill="none" stroke="url(#st)" stroke-width="1.400"/><path d="M172.600 47.200H185.800V52.800Z" fill="url(#st)"/><path d="M172.400 45.500h13.600" stroke="#111" stroke-width="1.100" stroke-dasharray="1.300 1.100"/><rect x="218.2" y="37.7" width="6.6" height="2" fill="url(#st)"/><rect x="218.2" y="41" width="6.6" height="2" fill="url(#st)"/><rect x="218.2" y="44.2" width="6.6" height="2" fill="url(#st)"/><rect x="218.2" y="47" width="6.6" height="2" fill="url(#st)"/><rect x="209.2" y="50.1" width="15.6" height="3" rx="1.400" fill="url(#st)"/><rect x="210.2" y="51.1" width="13.6" height="1" fill="#f4d8a0" opacity="0.850"/><path d="M212.500 38v8.600" stroke="#111" stroke-width="1.100" stroke-dasharray="1.200 0.800"/><path d="M210.200 45.600l2.300 3l2.300-3" fill="none" stroke="#111" stroke-width="1.200"/><rect x="244.3" y="37.7" width="6.6" height="2" fill="url(#st)"/><rect x="244.3" y="44.2" width="6.6" height="2" fill="url(#st)"/><rect x="244.3" y="50.9" width="6.6" height="2" fill="url(#st)"/><rect x="241.5" y="41" width="9.4" height="2" fill="url(#st)"/><rect x="235" y="47.1" width="15.8" height="3" rx="1.400" fill="url(#st)"/><rect x="236" y="48.1" width="13.8" height="1" fill="#f4d8a0" opacity="0.850"/><path d="M237.600 41.300v3.600" stroke="#111" stroke-width="1.100"/><path d="M235.300 43l2.300 2.800l2.300-2.800" fill="none" stroke="#111" stroke-width="1.200"/><rect x="261.2" y="37.9" width="6.6" height="2" fill="url(#st)"/><rect x="261.2" y="44.9" width="6.6" height="2" fill="url(#st)"/><rect x="261.2" y="50.9" width="6.6" height="2" fill="url(#st)"/><rect x="261.2" y="48" width="9.6" height="2" fill="url(#st)"/><rect x="261.2" y="41" width="15.6" height="3" rx="1.400" fill="url(#st)"/><rect x="262.2" y="42" width="13.6" height="1" fill="#eef0f6" opacity="0.850"/><path d="M274.700 46v3.800" stroke="#111" stroke-width="1.100"/><path d="M272.400 48.200l2.300-2.800l2.300 2.800" fill="none" stroke="#111" stroke-width="1.200"/><rect x="287.2" y="42.1" width="6.6" height="2" fill="url(#st)"/><rect x="287.2" y="45.2" width="6.6" height="2" fill="url(#st)"/><rect x="287.2" y="48.3" width="6.6" height="2" fill="url(#st)"/><rect x="287.2" y="51.1" width="6.6" height="2" fill="url(#st)"/><rect x="287.3" y="37.9" width="15.8" height="3" rx="1.400" fill="url(#st)"/><rect x="288.3" y="38.9" width="13.8" height="1" fill="#eef0f6" opacity="0.850"/><path d="M300.400 43v10.200" stroke="#111" stroke-width="1.100" stroke-dasharray="1.200 0.800"/><path d="M298 45.400l2.400-3l2.400 3" fill="none" stroke="#111" stroke-width="1.200"/><path d="M569.600 45v-2q0-1.700 1.700-1.700q1.700 0 1.900 1.700v1.400" fill="none" stroke="#222" stroke-width="1.100"/><path d="M568 45h5.800l.400 4.500h-6z" fill="#fbf6d8" stroke="#222" stroke-width="0.900"/><path d="M569.800 48.900h4.200" stroke="#f0c820" stroke-width="1"/><rect x="570.300" y="45.900" width="1.500" height="1.500" fill="#222"/><path d="M6.600 68.700V85.600L10.400 82L13.400 88.200L16 87L13.200 81H18.400Z" fill="#000" stroke="#fff" stroke-width="0.500" stroke-opacity="0.600"/><path d="M3.800 116q.4-9 4.400-12q4-4.600 12-5" fill="none" stroke="#444" stroke-width="1"/><path d="M9.400 106l12.800 7.400l-5.200 5.800z" fill="#000"/><rect x="4.500" y="100.500" width="5.400" height="5.400" fill="#7cc4f8" stroke="#1414d8" stroke-width="1.200"/><rect x="20.800" y="97.200" width="3.800" height="3.800" fill="#d8dcf4" stroke="#5050c0" stroke-width="1"/><rect x="1.800" y="116.600" width="3.800" height="3.800" fill="#d8dcf4" stroke="#5050c0" stroke-width="1"/><path d="M2.100 149.800V140.200Q5.500 140.600 7.500 138.600Q9 136.500 10.400 132.600Q12 128 15.200 127.900Q19 127.800 20.400 130.400Q21.400 133 20.200 134.800Q19.600 133 18.600 131.800Q17.200 130.600 15.600 131.600Q14 133 14.200 136Q14.600 139.400 17.600 140.400Q20 140.800 23.700 140.200V149.800Z" fill="url(#gtw)"/><path d="M2.100 140.200Q5.500 140.600 7.500 138.600Q9 136.500 10.400 132.600Q12 128 15.200 127.900Q19 127.800 20.400 130.400Q21.400 133 20.200 134.800Q19.600 133 18.600 131.800Q17.200 130.600 15.600 131.600Q14 133 14.200 136Q14.600 139.400 17.600 140.400Q20 140.800 23.700 140.200" fill="none" stroke="#1c1c1c" stroke-width="1.300"/><path d="M3 141.400H8Q10 140 11.600 134.600Q13 129.600 15.400 129.300Q18.400 129.200 19.400 131M13 136.600Q13.600 140.600 17.400 141.500H23" fill="none" stroke="#fff" stroke-width="0.700" opacity="0.850"/><path d="M15.200 172.200l5.800 4.300" stroke="#5a4400" stroke-width="6.200" stroke-linecap="round"/><path d="M15.200 172.200l5.800 4.300" stroke="#e4b408" stroke-width="4.200" stroke-linecap="round"/><path d="M16.600 171.800l5 3.700" stroke="#ffe468" stroke-width="1.200"/><circle cx="8.900" cy="165.300" r="7.600" fill="url(#gzoom)" stroke="#2a2a2a" stroke-width="1.300"/><linearGradient id="gms" x1="0" y1="1" x2="0" y2="0"><stop offset="0" stop-color="#fbe4e0"/><stop offset="1" stop-color="#f0aca4"/></linearGradient><g transform="translate(11.700,187.100) rotate(63.200)"><rect x="0" y="0" width="19.700" height="11.600" fill="url(#gms)" stroke="#1c1c1c" stroke-width="1.200"/><rect x="1.100" y="1.100" width="17.500" height="9.400" fill="none" stroke="#fff" stroke-width="0.700" opacity="0.800"/><path d="M2.500 11.400v-4.400M5 11.400v-2.800M7.500 11.400v-4.400M10 11.400v-2.800M12.500 11.400v-4.400M15 11.400v-2.800M17.500 11.400v-4.400" stroke="#1c1c1c" stroke-width="1.100"/></g><rect x="3.600" y="220.200" width="18.600" height="17.800" fill="url(#gsq)" stroke="#111" stroke-width="1.300"/><path d="M21 221.400V236.800H4.800Z" fill="#9ea4bc" opacity="0.350"/><rect x="4.800" y="221.400" width="16.200" height="15.400" fill="none" stroke="#fff" stroke-width="0.800" opacity="0.900"/><path d="M13.700 247l9 6.800v12.400l-10.300 3.800l-9-5.200v-12.400z" fill="#eef0f6" stroke="#333" stroke-width="1.100"/><path d="M13.700 247.400v14l-10 3.200v-11.600z" fill="#a8b0c8"/><path d="M13.700 247.400l8.600 6.600v11.800l-8.600-4.400z" fill="#e8ecf6"/><path d="M13.700 261.400l8.600 4.600l-9.900 3.600l-8.400-4.800z" fill="#5a50a0"/><path d="M13.700 261.400l8.600 4.600l-3.600 1.300l-8.400-4.800z" fill="#206494"/><circle cx="13" cy="288.800" r="9.400" fill="url(#gell)" stroke="#2a2a2a" stroke-width="1.300"/><path d="M9.300 308.600l6.500 5.200l-2.100 9l-8.900.2l-3.100-8.600z" fill="url(#gpent)" stroke="#333" stroke-width="1.100"/><path d="M17.200 313l1.800 5.200l5.600 2.400l-4.800 3l.5 5.800l-5-3.800l-6.800 1.200l2.800-4.800l-3.600-4.200l5.800.4z" fill="url(#gstar)" stroke="#333" stroke-width="1.100"/><path d="M12.0 349.5 L12.0 349.4 L12.1 349.3 L12.2 349.3 L12.3 349.2 L12.4 349.2 L12.5 349.1 L12.6 349.1 L12.8 349.1 L12.9 349.2 L13.0 349.2 L13.2 349.3 L13.3 349.4 L13.4 349.5 L13.5 349.7 L13.6 349.8 L13.7 350.0 L13.8 350.2 L13.8 350.4 L13.8 350.7 L13.8 350.9 L13.7 351.1 L13.6 351.4 L13.5 351.6 L13.4 351.8 L13.2 352.0 L13.0 352.2 L12.7 352.4 L12.5 352.6 L12.2 352.7 L11.9 352.8 L11.5 352.8 L11.2 352.9 L10.8 352.8 L10.5 352.8 L10.1 352.7 L9.8 352.5 L9.4 352.3 L9.1 352.1 L8.8 351.8 L8.5 351.5 L8.3 351.2 L8.1 350.8 L7.9 350.4 L7.8 350.0 L7.7 349.5 L7.7 349.0 L7.7 348.6 L7.8 348.1 L7.9 347.6 L8.1 347.1 L8.3 346.7 L8.6 346.2 L8.9 345.8 L9.3 345.4 L9.8 345.1 L10.3 344.8 L10.8 344.6 L11.3 344.4 L11.9 344.2 L12.5 344.2 L13.1 344.2 L13.7 344.2 L14.4 344.4 L15.0 344.6 L15.6 344.8 L16.1 345.2 L16.6 345.6 L17.1 346.0 L17.6 346.6 L18.0 347.1 L18.3 347.8 L18.6 348.4 L18.8 349.1 L18.9 349.8 L19.0 350.6 L18.9 351.3 L18.8 352.1 L18.6 352.8 L18.3 353.6 L18.0 354.3 L17.5 354.9 L17.0 355.6 L16.4 356.1 L15.8 356.6 L15.0 357.1 L14.3 357.4 L13.5 357.7 L12.6 357.9 L11.8 358.0 L10.9 358.1 L10.0 358.0 L9.1 357.8 L8.2 357.5 L7.4 357.2 L6.6 356.7 L5.8 356.2 L5.1 355.5 L4.5 354.8 L3.9 354.0 L3.4 353.2 L3.0 352.3 L2.7 351.3 L2.5 350.3 L2.4 349.3 L2.4 348.3 L2.6 347.3 L2.8 346.2 L3.2 345.2 L3.6 344.3 L4.2 343.4 L4.8 342.5 L5.6 341.7 L6.4 341.0 L7.4 340.4 L8.4 339.9 L9.4 339.5 L10.5 339.2 L11.6 339.0 L12.8 338.9 L14.0 339.0 L15.1 339.1 L16.3 339.5 L17.4 339.9 L18.5 340.4 L19.5 341.1 L20.4 341.9 L21.3 342.8 L22.1 343.8 L22.7 344.8 L23.3 346.0 L23.7 347.1 L24.0 348.4 L24.2 349.7 L24.2 351.0 L24.1 352.3 L23.9 353.6 L23.5 354.8 L22.9 356.1 L22.3 357.3 L21.5 358.4" fill="none" stroke="#1c1c1c" stroke-width="1.100"/><path d="M2 368.600H6.600L2.900 378.200L7.400 377.700Q8.600 379.600 9.200 384Q10.200 389.600 13.600 389.300Q18 388.600 21.600 384.300" fill="none" stroke="#1c1c1c" stroke-width="1.400" stroke-linejoin="round"/><linearGradient id="gpc" x1="0" y1="0" x2="1" y2="0.600"><stop offset="0" stop-color="#fff0a0"/><stop offset="0.350" stop-color="#f8d820"/><stop offset="1" stop-color="#e0a800"/></linearGradient><path d="M16.400 367.200L24.200 373.100L21 379.700L13.800 376.400Z" fill="url(#gpc)" stroke="#7a5c00" stroke-width="0.600"/><path d="M13.800 376.400L21 379.700L16.500 385L12.500 387.800L12.300 387.400L12.500 382Z" fill="#fffdf4" stroke="#8a7a50" stroke-width="0.500"/><path d="M17 378l3.600 1.700l-4.200 5z" fill="#e8dcc0"/><path d="M12.200 387.900L12.600 384.800L14.800 386.200Z" fill="#111"/><path d="M2.600 398.700H14.400M2.600 398.700Q8 402 10.200 409.500Q11 414.600 7.900 417.600L5.400 418.600" fill="none" stroke="#1c1c1c" stroke-width="1.200"/><path d="M5.200 418.900h6.500" stroke="#111" stroke-width="1"/><rect x="1.500" y="416.500" width="3.800" height="3.800" fill="#fff" stroke="#000" stroke-width="1.100"/><rect x="11.500" y="418" width="1.900" height="1.900" fill="#fff" stroke="#000" stroke-width="0.800"/><linearGradient id="gpn" x1="0" y1="0" x2="1" y2="0.500"><stop offset="0" stop-color="#b4dcf8"/><stop offset="0.450" stop-color="#90b0d0"/><stop offset="1" stop-color="#74808e"/></linearGradient><path d="M17 396.700L24.200 402.600L21 407.900L15.100 405.300Z" fill="url(#gpn)" stroke="#56606c" stroke-width="0.600"/><path d="M15.100 405.300L21 407.900L19.800 410.200L14.600 407.600Z" fill="#f0c828" stroke="#7a5c00" stroke-width="0.500"/><path d="M15.600 408.300L19.400 410.100L13.400 417.400L12.900 417Z" fill="#e0e0e4" stroke="#222" stroke-width="0.800"/><path d="M17.400 409.400L13.200 417.100" stroke="#222" stroke-width="0.700"/><path d="M36.300 69v-1.400q0-2 2-2q2 0 2 2v1.400" fill="none" stroke="#4a4a4a" stroke-width="2.200"/><path d="M36.300 69v-1.400q0-2 2-2q2 0 2 2v1.400" fill="none" stroke="#e4e4e4" stroke-width="0.900"/><linearGradient id="glk" x1="0" y1="0" x2="0" y2="1"><stop offset="0" stop-color="#ffe060"/><stop offset="1" stop-color="#d8a000"/></linearGradient><rect x="34.800" y="68.600" width="7" height="4" fill="url(#glk)" stroke="#5a4400" stroke-width="0.800"/><rect x="37.500" y="69.600" width="1.600" height="2" fill="#302000"/><path d="M724.5 73.39999999999999l5.200 5" stroke="#000" stroke-width="1.400"/><path d="M730.9000000000001 79.6l-4.700-.500l4.100-4.100z" fill="#000"/><path d="M722.7 69.19999999999999l2.4 2.4l-2.4 2.4l-2.4 -2.4z" fill="#a8d8ff" stroke="#0404e0" stroke-width="1.7"/><path d="M733.0 79.3l2.5 2.5l-2.5 2.5l-2.5 -2.5z" fill="#a8b0b0" stroke="#3c3c3c" stroke-width="1.1"/><path d="M724.5 111.6l5.200 5" stroke="#000" stroke-width="1.400"/><path d="M730.9000000000001 117.8l-4.700-.500l4.100-4.100z" fill="#000"/><path d="M722.7 107.39999999999999l2.4 2.4l-2.4 2.4l-2.4 -2.4z" fill="#a8d8ff" stroke="#0404e0" stroke-width="1.7"/><path d="M733.0 117.5l2.5 2.5l-2.5 2.5l-2.5 -2.5z" fill="#b0ecf4" stroke="#3c3c3c" stroke-width="1.1"/><path d="M724.8 254.0l5.200 5" stroke="#000" stroke-width="1.400"/><path d="M731.2 260.2l-4.700-.500l4.100-4.100z" fill="#000"/><path d="M723 249.79999999999998l2.4 2.4l-2.4 2.4l-2.4 -2.4z" fill="#a8d8ff" stroke="#0404e0" stroke-width="1.7"/><path d="M733.3 259.9l2.5 2.5l-2.5 2.5l-2.5 -2.5z" fill="#b0b8b8" stroke="#3c3c3c" stroke-width="1.1"/><path d="M733 133.500v13h-13" stroke="#3a4a3a" stroke-width="1.100" stroke-dasharray="1.600 1.400" fill="none"/><path d="M733 159v12h-13" stroke="#3a4a3a" stroke-width="1.100" stroke-dasharray="1.600 1.400" fill="none"/><path d="M733 168.8l2.2 2.2l-2.2 2.2l-2.2 -2.2z" fill="#c8c8c8" stroke="#444" stroke-width="0.9"/><path d="M733 185v12" stroke="#3a4a3a" stroke-width="1.100" stroke-dasharray="1.600 1.400" fill="none"/><path d="M720 197h13" stroke="#333" stroke-width="1" fill="none"/><path d="M733 187.0l1.6 1.6l-1.6 1.6l-1.6 -1.6z" fill="#40a040" stroke="#205020" stroke-width="0.7"/><path d="M732.700 211v12h-12.700" stroke="#3a4a3a" stroke-width="1.100" stroke-dasharray="1.600 1.400" fill="none"/><path d="M723.5 213.1l1.6 1.6l-1.6 1.6l-1.6 -1.6z" fill="#c0d8c0" stroke="#305030" stroke-width="0.8"/><path d="M720.700 276.800q9.900 1.200 9.900 7.200q0 3-1.800 4.900q4.800-.5 6.800-4.900" fill="none" stroke="#1c5c1c" stroke-width="1.300"/><path d="M728 289.400l4-1.400" stroke="#1c5c1c" stroke-width="1.600"/><path d="M720.700 315.500l14.900-13.500M720.700 311.600l14.900-5.200" stroke="#444" stroke-width="0.900"/><circle cx="727.900" cy="308.800" r="1.800" fill="#50c050" stroke="#104010" stroke-width="0.900"/><path d="M720.600 328.800q8 .6 7 11.200q6-.6 7.900-5" fill="none" stroke="#666" stroke-width="1"/><path d="M727.6 337.6l2.4 2.4l-2.4 2.4l-2.4 -2.4z" fill="#909090" stroke="#333" stroke-width="0.9"/><path d="M720.600 354q4.400-.2 7 2.300q3.600 3.400 1.400 9.500q4.800-.8 6.500-5.300" fill="none" stroke="#666" stroke-width="1"/><rect x="726" y="354.600" width="3.400" height="3.400" fill="#50c050" stroke="#104010" stroke-width="0.900"/><path d="M720.600 393.300l5-4.300M730.400 385l5.100-4.400" stroke="#b02828" stroke-width="1"/><path d="M721.800 395l3-6.600M724.400 393l3-6.600M730 387.600l3-6.600M732.600 385.400l3-6.600" stroke="#c02020" stroke-width="1.100"/><rect x="726" y="385.300" width="3.400" height="3.400" fill="#50c050" stroke="#104010" stroke-width="0.900"/><circle cx="696.600" cy="68.400" r="3.400" fill="#f4f4f4" stroke="#808080" stroke-width="1"/><path d="M699 71l3 3.200" stroke="#808080" stroke-width="1.600"/><path d="M695.400 67v3M697.400 67v3" stroke="#a0a0a0" stroke-width="0.600"/><path d="M694 450.200l1.600-8l6 5z" fill="#d8d8d8" stroke="#888" stroke-width="0.600"/><rect x="695" y="443.400" width="1.600" height="1.600" fill="#d04040"/><rect x="696.800" y="445" width="1.600" height="1.600" fill="#40a040"/><rect x="698.600" y="446.400" width="1.600" height="1.600" fill="#4060d0"/><rect x="695.200" y="446.600" width="1.600" height="1.600" fill="#c0a030"/><rect x="697" y="448" width="1.400" height="1.400" fill="#8040a0"/></svg>
</body></html>
